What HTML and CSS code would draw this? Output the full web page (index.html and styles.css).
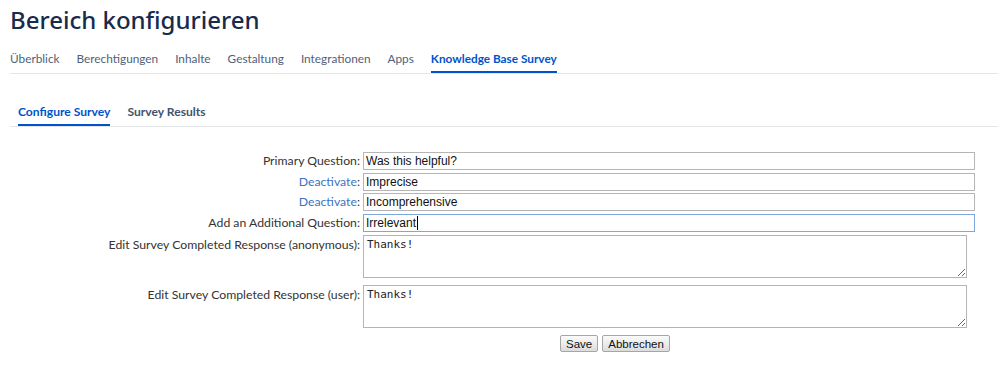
FILE: index.html
```html
<!DOCTYPE html>
<html lang="de">
<head>
    <meta charset="UTF-8">
    <title>Bereich konfigurieren</title>
    <link rel="stylesheet" href="styles.css">
</head>
<body>

<h1 class="page-title">Bereich konfigurieren</h1>

<nav class="main-tabs">
    <a href="#">Überblick</a>
    <a href="#">Berechtigungen</a>
    <a href="#">Inhalte</a>
    <a href="#">Gestaltung</a>
    <a href="#">Integrationen</a>
    <a href="#">Apps</a>
    <a href="#" class="active">Knowledge Base Survey</a>
</nav>

<div class="sub-tabs">
    <a href="#" class="active">Configure Survey</a>
    <a href="#">Survey Results</a>
</div>

<form class="survey-form">
    <label class="field-label">Primary Question:</label>
    <input class="field-input" type="text" value="Was this helpful?">

    <label class="field-label"><a href="#">Deactivate</a>:</label>
    <input class="field-input" type="text" value="Imprecise">

    <label class="field-label"><a href="#">Deactivate</a>:</label>
    <input class="field-input" type="text" value="Incomprehensive">

    <label class="field-label">Add an Additional Question:</label>
    <div class="field-input focused">Irrelevant<span class="caret"></span></div>

    <label class="field-label top">Edit Survey Completed Response (anonymous):</label>
    <textarea class="field-area">Thanks!</textarea>

    <label class="field-label top second">Edit Survey Completed Response (user):</label>
    <textarea class="field-area second">Thanks!</textarea>

    <div class="form-buttons">
        <button type="button">Save</button>
        <button type="button">Abbrechen</button>
    </div>
</form>

</body>
</html>
```

FILE: styles.css
```css
body {
    margin: 0;
    padding: 0 0 0 10px;
    font-family: "Noto Sans", "Open Sans", sans-serif;
    color: #172b4d;
    background: #fff;
}
a {
    text-decoration: none;
}
.page-title {
    margin: 0;
    padding-top: 4px;
    font-size: 24px;
    font-weight: 500;
    line-height: 32px;
    color: #172b4d;
}
.main-tabs {
    display: flex;
    gap: 17px;
    margin-top: 13px;
    border-bottom: 1px solid #e4e6ea;
}
.main-tabs a,
.sub-tabs a {
    display: block;
    font-family: Lato, "Noto Sans", sans-serif;
    font-size: 11.8px;
    line-height: 20px;
    padding-bottom: 2px;
    color: #505f79;
    border-bottom: 2px solid transparent;
}
.main-tabs a.active,
.sub-tabs a.active {
    color: #0052cc;
    font-weight: 700;
    border-bottom-color: #0052cc;
}
.sub-tabs {
    display: flex;
    gap: 17px;
    margin-top: 28px;
    padding-left: 8px;
    border-bottom: 1px solid #e4e6ea;
}
.sub-tabs a {
    font-size: 12.1px;
    font-weight: 700;
    color: #42526e;
}
.survey-form {
    display: grid;
    grid-template-columns: 353px 612px;
    row-gap: 2.7px;
    margin-top: 25px;
}
.field-label {
    font-family: Lato, "Noto Sans", sans-serif;
    font-size: 12.25px;
    line-height: 18px;
    text-align: right;
    padding-right: 3px;
    color: #333;
    white-space: nowrap;
}
.field-label a {
    color: #3b73c4;
}
.field-label.top {
    padding-top: 1px;
}
.field-label.second,
.field-area.second {
    margin-top: 5px;
}
.field-input {
    box-sizing: border-box;
    height: 18px;
    margin: 0;
    padding: 0 2px;
    border: 1px solid #b5b5b5;
    font-family: "Liberation Sans", Arial, sans-serif;
    font-size: 12px;
    line-height: 16px;
    color: #111;
    background: #fff;
}
.field-input.focused {
    border-color: #7ea6e0;
}
.caret {
    display: inline-block;
    width: 1px;
    height: 14px;
    margin-left: 1px;
    vertical-align: -3px;
    background: #000;
}
.field-area {
    box-sizing: border-box;
    width: 604px;
    height: 43px;
    margin: 0;
    padding: 2px 3px;
    border: 1px solid #b5b5b5;
    font-family: "DejaVu Sans Mono", monospace;
    font-size: 11px;
    color: #222;
    resize: both;
}
.form-buttons {
    grid-column: 2;
    display: flex;
    gap: 4px;
    margin-top: 4px;
    padding-left: 197px;
}
.form-buttons button {
    height: 17px;
    padding: 0 5px;
    font-family: "Liberation Sans", Arial, sans-serif;
    font-size: 11.5px;
    color: #111;
    border: 1px solid #a6a6a6;
    border-radius: 2px;
    background: linear-gradient(#fbfbfb, #dcdcdc);
}
```
